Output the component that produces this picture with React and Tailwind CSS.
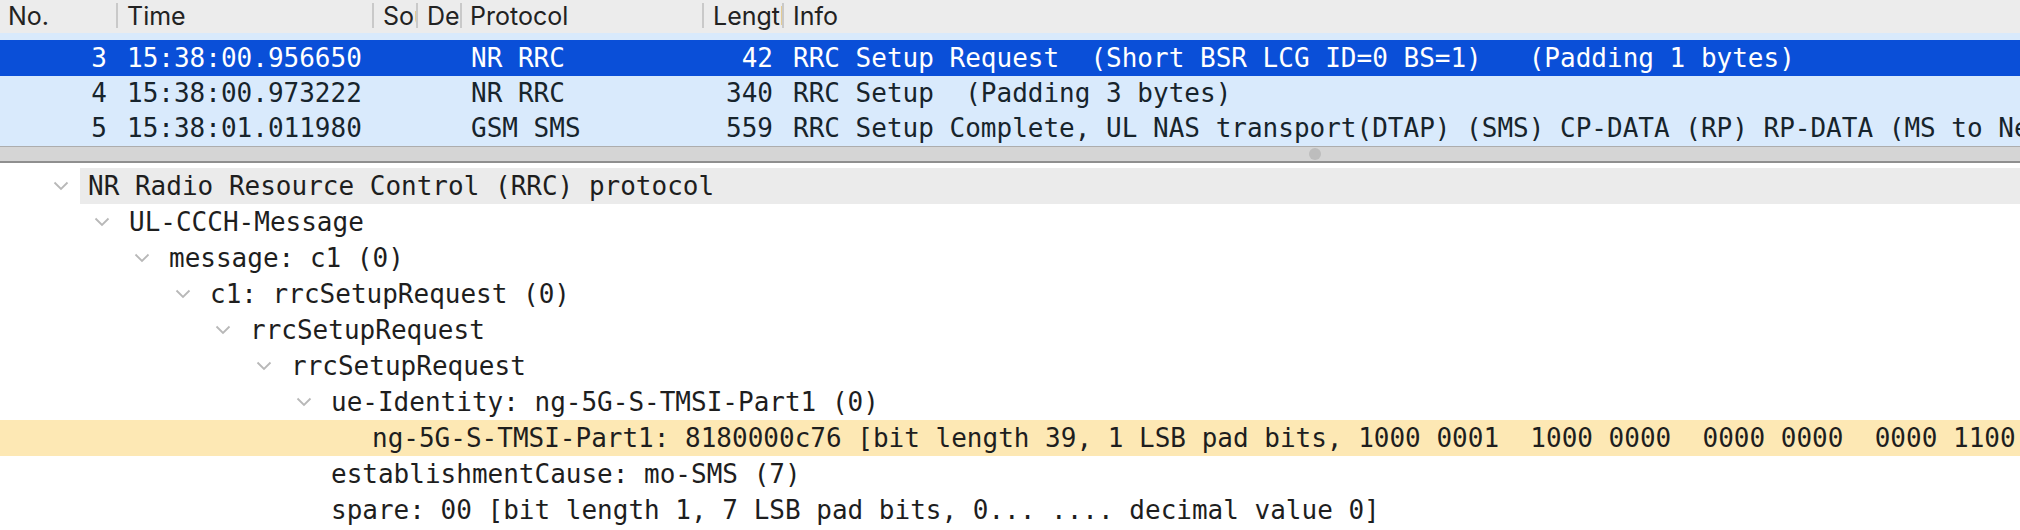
import React from "react";

const mono = "font-['DejaVu_Sans_Mono','Liberation_Mono',monospace]";

const packets = [
  {
    no: "3",
    time: "15:38:00.956650",
    proto: "NR RRC",
    len: "42",
    info: "RRC Setup Request  (Short BSR LCG ID=0 BS=1)   (Padding 1 bytes)",
    sel: true,
    h: "h-[36px]",
  },
  {
    no: "4",
    time: "15:38:00.973222",
    proto: "NR RRC",
    len: "340",
    info: "RRC Setup  (Padding 3 bytes)",
    h: "h-[35px]",
  },
  {
    no: "5",
    time: "15:38:01.011980",
    proto: "GSM SMS",
    len: "559",
    info: "RRC Setup Complete, UL NAS transport(DTAP) (SMS) CP-DATA (RP) RP-DATA (MS to Network)  (SMS-SUBMIT)",
    h: "h-[35px]",
  },
];

const indent = [
  "pl-[53px]",
  "pl-[94px]",
  "pl-[134px]",
  "pl-[175px]",
  "pl-[215px]",
  "pl-[256px]",
  "pl-[296px]",
  "pl-[337px]",
];

const tree = [
  { d: 0, t: "NR Radio Resource Control (RRC) protocol", chev: true, hl: "gray" },
  { d: 1, t: "UL-CCCH-Message", chev: true },
  { d: 2, t: "message: c1 (0)", chev: true },
  { d: 3, t: "c1: rrcSetupRequest (0)", chev: true },
  { d: 4, t: "rrcSetupRequest", chev: true },
  { d: 5, t: "rrcSetupRequest", chev: true },
  { d: 6, t: "ue-Identity: ng-5G-S-TMSI-Part1 (0)", chev: true },
  {
    d: 7,
    t: "ng-5G-S-TMSI-Part1: 8180000c76 [bit length 39, 1 LSB pad bits, 1000 0001  1000 0000  0000 0000  0000 1100  0111 011. decimal value 69793206330]",
    chev: false,
    hl: "yellow",
  },
  { d: 6, t: "establishmentCause: mo-SMS (7)", chev: false },
  { d: 6, t: "spare: 00 [bit length 1, 7 LSB pad bits, 0... .... decimal value 0]", chev: false },
];

function Sep() {
  return <div className="w-[2px] h-[25px] mt-[3px] self-start bg-[#c9c9c9] shrink-0" />;
}

function Chevron() {
  return (
    <svg width="16" height="10" viewBox="0 0 16 10" className="shrink-0">
      <polyline points="1.5,1.5 8,8 14.5,1.5" fill="none" stroke="#b8b8b8" strokeWidth="1.8" />
    </svg>
  );
}

export default function App() {
  return (
    <div className="w-[2020px] h-[530px] overflow-hidden bg-white flex flex-col">
      {/* Column header */}
      <div className="h-[33px] bg-[#ececec] flex items-center text-[25px] text-[#222] font-['Inter',sans-serif] shrink-0">
        <div className="w-[116px] pl-[8px] overflow-hidden whitespace-nowrap">No.</div>
        <Sep />
        <div className="w-[254px] pl-[9px] overflow-hidden whitespace-nowrap">Time</div>
        <Sep />
        <div className="w-[42px] pl-[9px] overflow-hidden whitespace-nowrap">Source</div>
        <Sep />
        <div className="w-[42px] pl-[9px] overflow-hidden whitespace-nowrap">Destination</div>
        <Sep />
        <div className="w-[240px] pl-[8px] overflow-hidden whitespace-nowrap">Protocol</div>
        <Sep />
        <div className="w-[78px] pl-[9px] overflow-hidden whitespace-nowrap">Length</div>
        <Sep />
        <div className="flex-1 pl-[9px] overflow-hidden whitespace-nowrap">Info</div>
      </div>

      {/* Packet list */}
      <div className={`bg-[#d9eafc] border-b border-[#adadad] shrink-0 ${mono} text-[26px]`}>
        <div className="h-[7px]" />
        {packets.map((p) => (
          <div
            key={p.no}
            className={`${p.h} flex items-center whitespace-pre overflow-hidden ${
              p.sel ? "bg-[#0a4fd8] text-white" : "text-[#17242c]"
            }`}
          >
            <div className="w-[116px] pr-[9px] text-right shrink-0">{p.no}</div>
            <div className="w-[2px] shrink-0" />
            <div className="w-[254px] pl-[9px] shrink-0 overflow-hidden">{p.time}</div>
            <div className="w-[2px] shrink-0" />
            <div className="w-[42px] shrink-0" />
            <div className="w-[2px] shrink-0" />
            <div className="w-[42px] shrink-0" />
            <div className="w-[2px] shrink-0" />
            <div className="w-[240px] pl-[9px] shrink-0 overflow-hidden">{p.proto}</div>
            <div className="w-[2px] shrink-0" />
            <div className="w-[78px] pr-[9px] text-right shrink-0">{p.len}</div>
            <div className="w-[2px] shrink-0" />
            <div className="flex-1 pl-[9px] overflow-hidden">{p.info}</div>
          </div>
        ))}
      </div>

      {/* Splitter */}
      <div className="h-[16px] bg-[#d5d5d5] border-b-2 border-[#8f8f8f] flex items-center shrink-0">
        <div className="ml-[1309px] w-[12px] h-[12px] rounded-full bg-[#bdbdbd]" />
      </div>

      {/* Detail tree */}
      <div className={`flex-1 pt-[5px] ${mono} text-[26px] text-[#1e1e1e]`}>
        {tree.map((r, i) => (
          <div
            key={i}
            className={`h-[36px] flex items-center whitespace-pre overflow-hidden ${
              r.hl === "yellow" ? "bg-[#fde8b4]" : ""
            } ${indent[r.d]}`}
          >
            <div className="w-[35px] shrink-0 flex items-center">{r.chev ? <Chevron /> : null}</div>
            <div
              className={`h-full flex items-center flex-1 overflow-hidden ${
                r.hl === "gray" ? "bg-[#ebebeb] -ml-[8px] pl-[8px]" : ""
              }`}
            >
              {r.t}
            </div>
          </div>
        ))}
      </div>
    </div>
  );
}
